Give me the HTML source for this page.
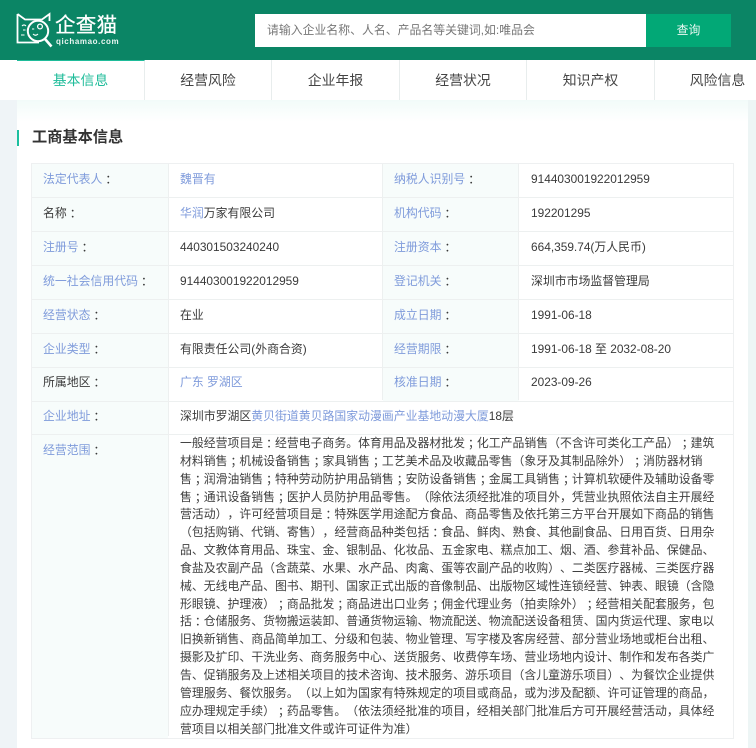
<!DOCTYPE html>
<html><head><meta charset="utf-8"><title>企查猫</title>
<style>
*{box-sizing:border-box}
html,body{margin:0;padding:0}
body{width:756px;height:748px;overflow:hidden;position:relative;background:linear-gradient(90deg,#eff4f7 0,#eff4f7 50%,#edf5f5 50%);font:11.88px/18px "Liberation Sans","Noto Sans CJK SC",sans-serif;color:#3a3a3a;text-spacing-trim:space-all;font-kerning:none}
i{font-style:normal;font-family:"Noto Sans CJK JP",sans-serif;line-height:0;position:relative;top:1px}
.abs,.abs>*{position:absolute}
#hd{left:0;top:0;width:756px;height:60px;background:#0b8565}
#search{position:absolute;left:255px;top:14px;width:391px;height:33px;background:#fff;color:#777;line-height:32px;padding-left:12px;white-space:nowrap}
#btn{position:absolute;left:646px;top:14px;width:85px;height:33px;background:#02a876;color:#e9f8f2;text-align:center;line-height:32px}
#nav{position:absolute;left:0;top:60px;width:756px;height:40px;background:#fff}
.tab{position:absolute;top:0;height:40px;line-height:40px;font-size:13.86px;color:#444;text-align:center;border-right:1px solid #e8eded;white-space:nowrap}
#main{position:absolute;left:17px;top:100px;width:731px;height:648px;background:linear-gradient(#f2fbf9 0,#fff 22px)}
#bar{position:absolute;left:17px;top:130px;width:2px;height:16px;background:#1cbf9f}
#title{position:absolute;left:32px;top:128px;font-size:15.2px;line-height:20px;font-weight:bold;color:#333}
#tb{position:absolute;left:31px;top:163px;width:703px;height:576px;border:1px solid #eef0f1}
.lb{position:absolute;background:#f7fcfb}
.hl{position:absolute;left:0;width:701px;height:1px;background:#edf0f0}
.vl{position:absolute;top:0;width:1px;background:#edf0f0}
.t{position:absolute;white-space:nowrap;line-height:18px}
.b{color:#7f9bdb}
#scope{position:absolute;left:180px;top:435px;line-height:17.85px;white-space:nowrap;color:#3f3f3f}
</style></head><body>
<div id="hd" class="abs"></div>
<svg style="position:absolute;left:16px;top:12px" width="40" height="36" viewBox="0 0 40 36" fill="none" stroke="#fff">
<path d="M1.5 2 L9 7.5 H26 L33.5 2 V9 M1.5 2 V30.5 H23" stroke-width="1.8"/>
<circle cx="22" cy="19" r="10.2" stroke-width="2"/>
<path d="M29 27 L35.5 34.5" stroke-width="2.6"/>
<circle cx="24" cy="14.5" r="2.4" stroke-width="1.3"/>
<path d="M16 17 h2.2 M17 22 q2.5 2.5 5 0 M6 14 q2 -2 4 0 M5 23 h3.5 M7 18 h2.5" stroke-width="1.1"/>
</svg>
<div style="position:absolute;left:55px;top:14px;font-size:20.5px;line-height:24px;color:#fff;letter-spacing:.3px;white-space:nowrap;-webkit-text-stroke:.25px #fff">企查猫</div>
<div style="position:absolute;left:56px;top:36px;font-size:8px;line-height:11px;color:#eaf6f2;letter-spacing:.6px;font-weight:bold;white-space:nowrap">qichamao.com</div>
<div id="search">请输入企业名称、人名、产品名等关键词,如:唯品会</div>
<div id="btn">查询</div>
<div id="nav">
<div class="tab" style="left:17px;width:128px;color:#1fbc9a;border-top:1px solid #1fbc9a;line-height:38px">基本信息</div>
<div class="tab" style="left:145px;width:127px">经营风险</div>
<div class="tab" style="left:272px;width:128px">企业年报</div>
<div class="tab" style="left:400px;width:127px">经营状况</div>
<div class="tab" style="left:527px;width:128px">知识产权</div>
<div class="tab" style="left:655px;width:125px;border:0">风险信息</div>
</div>
<div id="main"></div>
<div id="bar"></div>
<div id="title">工商基本信息</div>
<div id="tb">
<div class="lb" style="left:0;top:0;width:136px;height:574px"></div>
<div class="lb" style="left:351px;top:0;width:136px;height:237px"></div>
<div class="hl" style="top:33px"></div>
<div class="hl" style="top:67px"></div>
<div class="hl" style="top:101px"></div>
<div class="hl" style="top:135px"></div>
<div class="hl" style="top:169px"></div>
<div class="hl" style="top:203px"></div>
<div class="hl" style="top:237px"></div>
<div class="hl" style="top:270px"></div>
<div class="vl" style="left:136px;height:572px"></div>
</div>
<div class="vl" style="left:382px;top:164px;height:236px"></div>
<div class="vl" style="left:518px;top:164px;height:236px"></div>

<div class="t" style="left:43px;top:170px"><span class="b">法定代表人</span><i>：</i></div>
<div class="t" style="left:180px;top:170px" ><span class="b">魏晋有</span></div>
<div class="t" style="left:394px;top:170px"><span class="b">纳税人识别号</span><i>：</i></div>
<div class="t" style="left:531px;top:170px">914403001922012959</div>

<div class="t" style="left:43px;top:204px">名称<i>：</i></div>
<div class="t" style="left:180px;top:204px"><span class="b">华润</span>万家有限公司</div>
<div class="t" style="left:394px;top:204px"><span class="b">机构代码</span><i>：</i></div>
<div class="t" style="left:531px;top:204px">192201295</div>

<div class="t" style="left:43px;top:238px"><span class="b">注册号</span><i>：</i></div>
<div class="t" style="left:180px;top:238px">440301503240240</div>
<div class="t" style="left:394px;top:238px"><span class="b">注册资本</span><i>：</i></div>
<div class="t" style="left:531px;top:238px">664,359.74(万人民币)</div>

<div class="t" style="left:43px;top:272px"><span class="b">统一社会信用代码</span><i>：</i></div>
<div class="t" style="left:180px;top:272px">914403001922012959</div>
<div class="t" style="left:394px;top:272px"><span class="b">登记机关</span><i>：</i></div>
<div class="t" style="left:531px;top:272px">深圳市市场监督管理局</div>

<div class="t" style="left:43px;top:306px"><span class="b">经营状态</span><i>：</i></div>
<div class="t" style="left:180px;top:306px">在业</div>
<div class="t" style="left:394px;top:306px"><span class="b">成立日期</span><i>：</i></div>
<div class="t" style="left:531px;top:306px">1991-06-18</div>

<div class="t" style="left:43px;top:340px"><span class="b">企业类型</span><i>：</i></div>
<div class="t" style="left:180px;top:340px">有限责任公司(外商合资)</div>
<div class="t" style="left:394px;top:340px"><span class="b">经营期限</span><i>：</i></div>
<div class="t" style="left:531px;top:340px">1991-06-18 至 2032-08-20</div>

<div class="t" style="left:43px;top:373px">所属地区<i>：</i></div>
<div class="t" style="left:180px;top:373px"><span class="b">广东 罗湖区</span></div>
<div class="t" style="left:394px;top:373px"><span class="b">核准日期</span><i>：</i></div>
<div class="t" style="left:531px;top:373px">2023-09-26</div>

<div class="t" style="left:43px;top:407px"><span class="b">企业地址</span><i>：</i></div>
<div class="t" style="left:180px;top:407px">深圳市罗湖区<span class="b">黄贝街道黄贝路国家动漫画产业基地动漫大厦</span>18层</div>

<div class="t" style="left:43px;top:441px"><span class="b">经营范围</span><i>：</i></div>
<div id="scope">一般经营项目是<i>：</i>经营电子商务。体育用品及器材批发<i>；</i>化工产品销售（不含许可类化工产品）<i>；</i>建筑<br>材料销售<i>；</i>机械设备销售<i>；</i>家具销售<i>；</i>工艺美术品及收藏品零售（象牙及其制品除外）<i>；</i>消防器材销<br>售<i>；</i>润滑油销售<i>；</i>特种劳动防护用品销售<i>；</i>安防设备销售<i>；</i>金属工具销售<i>；</i>计算机软硬件及辅助设备零<br>售<i>；</i>通讯设备销售<i>；</i>医护人员防护用品零售。（除依法须经批准的项目外，凭营业执照依法自主开展经<br>营活动），许可经营项目是<i>：</i>特殊医学用途配方食品、商品零售及依托第三方平台开展如下商品的销售<br>（包括购销、代销、寄售），经营商品种类包括<i>：</i>食品、鲜肉、熟食、其他副食品、日用百货、日用杂<br>品、文教体育用品、珠宝、金、银制品、化妆品、五金家电、糕点加工、烟、酒、参茸补品、保健品、<br>食盐及农副产品（含蔬菜、水果、水产品、肉禽、蛋等农副产品的收购）、二类医疗器械、三类医疗器<br>械、无线电产品、图书、期刊、国家正式出版的音像制品、出版物区域性连锁经营、钟表、眼镜（含隐<br>形眼镜、护理液）<i>；</i>商品批发<i>；</i>商品进出口业务<i>；</i>佣金代理业务（拍卖除外）<i>；</i>经营相关配套服务，包<br>括<i>：</i>仓储服务、货物搬运装卸、普通货物运输、物流配送、物流配送设备租赁、国内货运代理、家电以<br>旧换新销售、商品简单加工、分级和包装、物业管理、写字楼及客房经营、部分营业场地或柜台出租、<br>摄影及扩印、干洗业务、商务服务中心、送货服务、收费停车场、营业场地内设计、制作和发布各类广<br>告、促销服务及上述相关项目的技术咨询、技术服务、游乐项目（含儿童游乐项目）、为餐饮企业提供<br>管理服务、餐饮服务。（以上如为国家有特殊规定的项目或商品，或为涉及配额、许可证管理的商品，<br>应办理规定手续）<i>；</i>药品零售。（依法须经批准的项目，经相关部门批准后方可开展经营活动，具体经<br>营项目以相关部门批准文件或许可证件为准）</div>
</body></html>
